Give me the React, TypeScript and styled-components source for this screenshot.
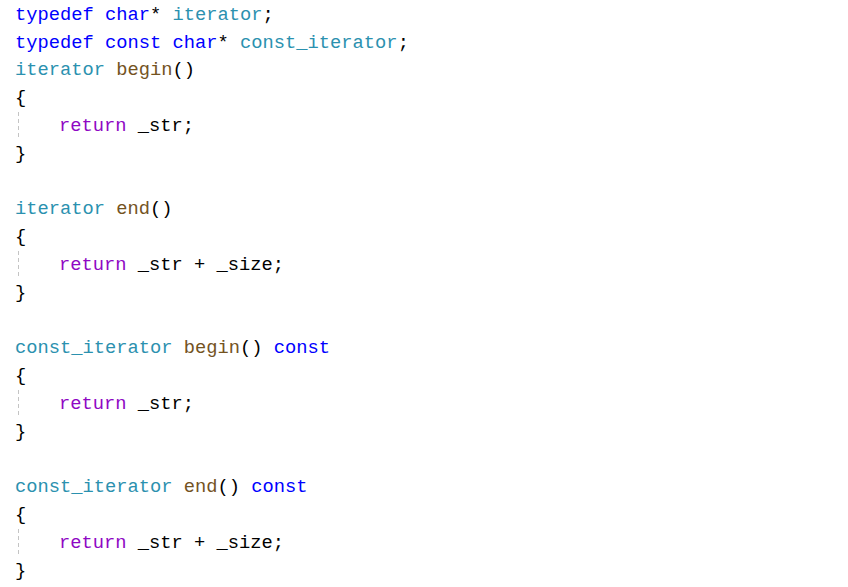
import React from "react";
import styled, { createGlobalStyle } from "styled-components";

const Global = createGlobalStyle`
  html, body { margin: 0; padding: 0; background: #ffffff; }
`;

const Editor = styled.div`
  padding: 1px 0 0 15px;
  font-family: "Liberation Mono", "DejaVu Sans Mono", monospace;
  font-size: 18.75px;
  color: #000000;
  background: #ffffff;
`;

const Line = styled.div`
  display: flex;
  align-items: center;
  height: 27.8px;
  white-space: pre;
`;

const Guide = styled.span`
  display: inline-block;
  align-self: stretch;
  width: 44px;
  flex: none;
  background-image: repeating-linear-gradient(
    to bottom,
    #c4c4c4 0 4px,
    transparent 4px 7px
  );
  background-size: 1px 100%;
  background-position: 3px 0;
  background-repeat: no-repeat;
`;

type Kind = "kw" | "type" | "fn" | "ret" | "plain";

const colors: Record<Kind, string> = {
  kw: "#0000ff",
  type: "#2b91af",
  fn: "#74531f",
  ret: "#8f08c4",
  plain: "#000000",
};

const Tok = styled.span<{ $k: Kind }>`
  color: ${(p) => colors[p.$k]};
`;

type Seg = [Kind, string];

const lines: { indent?: boolean; segs: Seg[] }[] = [
  { segs: [["kw", "typedef"], ["plain", " "], ["kw", "char"], ["plain", "* "], ["type", "iterator"], ["plain", ";"]] },
  { segs: [["kw", "typedef"], ["plain", " "], ["kw", "const"], ["plain", " "], ["kw", "char"], ["plain", "* "], ["type", "const_iterator"], ["plain", ";"]] },
  { segs: [["type", "iterator"], ["plain", " "], ["fn", "begin"], ["plain", "()"]] },
  { segs: [["plain", "{"]] },
  { indent: true, segs: [["ret", "return"], ["plain", " _str;"]] },
  { segs: [["plain", "}"]] },
  { segs: [] },
  { segs: [["type", "iterator"], ["plain", " "], ["fn", "end"], ["plain", "()"]] },
  { segs: [["plain", "{"]] },
  { indent: true, segs: [["ret", "return"], ["plain", " _str + _size;"]] },
  { segs: [["plain", "}"]] },
  { segs: [] },
  { segs: [["type", "const_iterator"], ["plain", " "], ["fn", "begin"], ["plain", "() "], ["kw", "const"]] },
  { segs: [["plain", "{"]] },
  { indent: true, segs: [["ret", "return"], ["plain", " _str;"]] },
  { segs: [["plain", "}"]] },
  { segs: [] },
  { segs: [["type", "const_iterator"], ["plain", " "], ["fn", "end"], ["plain", "() "], ["kw", "const"]] },
  { segs: [["plain", "{"]] },
  { indent: true, segs: [["ret", "return"], ["plain", " _str + _size;"]] },
  { segs: [["plain", "}"]] },
];

export default function App() {
  return (
    <>
      <Global />
      <Editor>
        {lines.map((l, i) => (
          <Line key={i}>
            {l.indent && <Guide />}
            {l.segs.map(([k, t], j) => (
              <Tok key={j} $k={k}>
                {t}
              </Tok>
            ))}
          </Line>
        ))}
      </Editor>
    </>
  );
}
